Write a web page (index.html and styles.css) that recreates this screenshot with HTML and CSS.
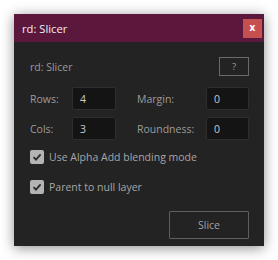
FILE: index.html
```html
<!DOCTYPE html>
<html>
<head>
<meta charset="utf-8">
<link rel="stylesheet" href="styles.css">
</head>
<body>
<div class="win">
  <div class="titlebar">
    <span class="title">rd: Slicer</span>
    <span class="close">x</span>
  </div>
  <div class="body">
    <div class="head">
      <span class="label">rd: Slicer</span>
      <span class="help">?</span>
    </div>
    <div class="grid">
      <span class="label">Rows:</span><span class="input">4</span>
      <span class="label">Margin:</span><span class="input">0</span>
      <span class="label">Cols:</span><span class="input">3</span>
      <span class="label">Roundness:</span><span class="input">0</span>
    </div>
    <div class="check"><span class="box"><svg width="10" height="10" viewBox="0 0 10 10"><path d="M1.5 5.2 L4 7.6 L8.6 2.4" fill="none" stroke="#2a2a2a" stroke-width="1.8"/></svg></span><span class="label">Use Alpha Add blending mode</span></div>
    <div class="check"><span class="box"><svg width="10" height="10" viewBox="0 0 10 10"><path d="M1.5 5.2 L4 7.6 L8.6 2.4" fill="none" stroke="#2a2a2a" stroke-width="1.8"/></svg></span><span class="label">Parent to null layer</span></div>
    <div class="foot"><span class="slice">Slice</span></div>
  </div>
</div>
</body>
</html>
```
FILE: styles.css
```css
html, body { margin: 0; padding: 0; background: #ffffff; }
body { padding: 14px; font-family: "Open Sans", "Noto Sans", sans-serif; }
.win {
  width: 250px;
  height: 232px;
  background: #232323;
  box-shadow: 0 2px 12px rgba(0,0,0,0.45);
  display: flex;
  flex-direction: column;
}
.titlebar {
  height: 28px;
  background: #5c173d;
  display: flex;
  align-items: center;
  justify-content: space-between;
  padding: 0 2px 0 8px;
}
.title { color: #f0f0f0; font-size: 11.2px; }
.close {
  width: 19px; height: 19px;
  background: #c4504f;
  color: #ffffff;
  font-size: 10px;
  font-weight: bold;
  display: flex; align-items: center; justify-content: center;
  line-height: 1;
  padding-bottom: 2px;
  box-sizing: border-box;
}
.body { padding: 15px 15px 0 16px; display: flex; flex-direction: column; }
.label { color: #9b9b9b; font-size: 10.5px; }
.head { display: flex; justify-content: space-between; align-items: center; height: 19px; }
.help {
  width: 30px; height: 19px; box-sizing: border-box;
  border: 1px solid #6a6a6a;
  color: #a0a0a0; font-size: 9.5px;
  display: flex; align-items: center; justify-content: center;
}
.grid {
  margin-top: 11px;
  display: grid;
  grid-template-columns: 42px 44px 21px 69px 43px;
  grid-template-rows: 23px 23px;
  row-gap: 7px;
  align-items: center;
}
.grid .label:nth-child(3), .grid .label:nth-child(7) { grid-column: 4; }
.input {
  height: 23px; box-sizing: border-box;
  background: #141414;
  border: 1px solid #2e2e2e;
  border-radius: 2px;
  color: #c8c8c8; font-size: 10.5px;
  padding-left: 7px;
  display: flex; align-items: center;
}
.check { display: flex; align-items: center; gap: 5px; height: 16px; margin-top: 9px; }
.check + .check { margin-top: 14px; }
.box {
  width: 14px; height: 14px; background: #b4b4b4; border-radius: 2px;
  display: flex; align-items: center; justify-content: center;
}
.check .label { color: #a6a6a6; }
.foot { display: flex; justify-content: flex-end; margin-top: 16px; }
.slice {
  width: 80px; height: 28px; box-sizing: border-box;
  border: 1px solid #5e5e5e;
  border-radius: 1px;
  color: #a0a0a0; font-size: 10.5px;
  display: flex; align-items: center; justify-content: center;
}
```
